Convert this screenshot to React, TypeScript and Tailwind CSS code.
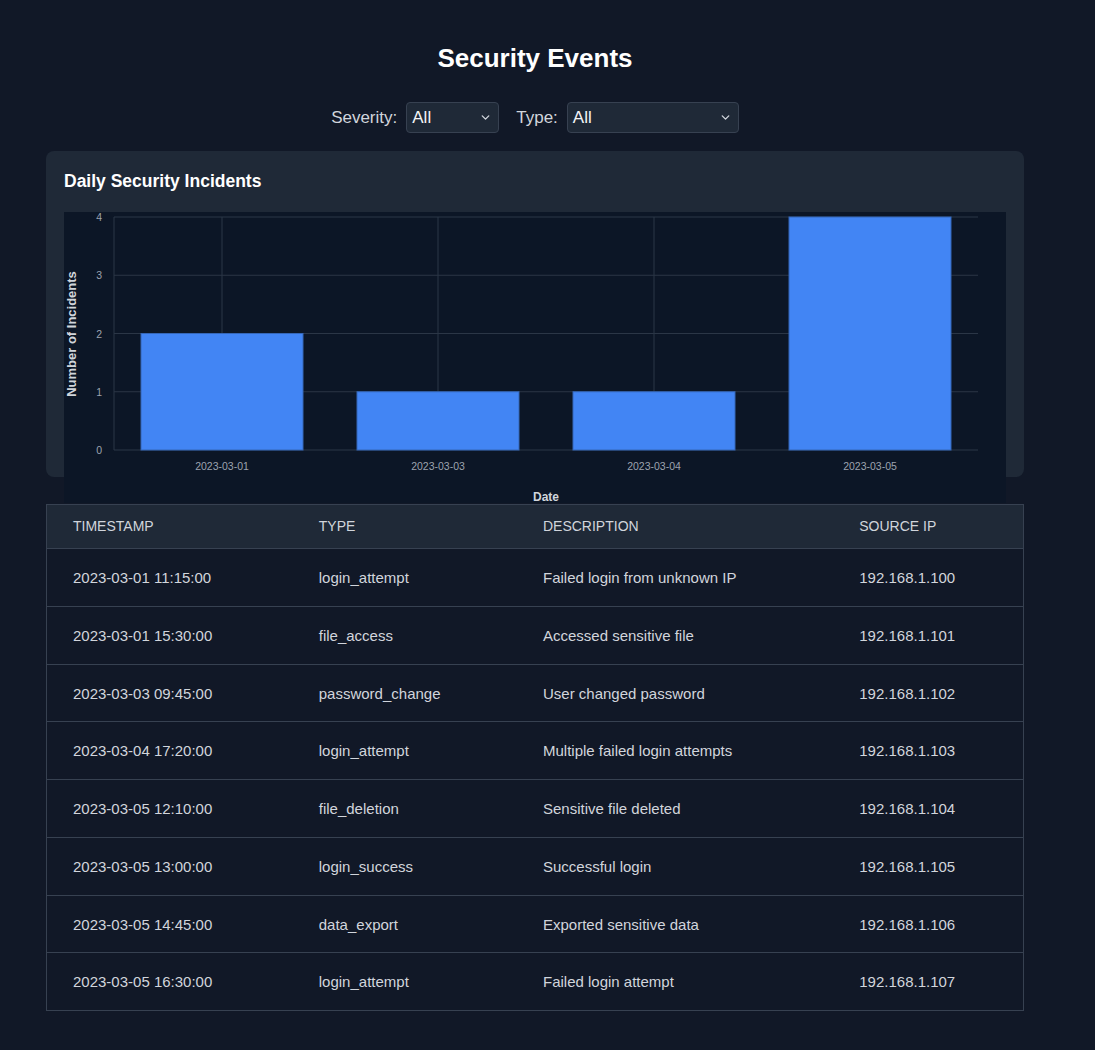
import { ChevronDown } from "lucide-react";

const events = [
  { ts: "2023-03-01 11:15:00", type: "login_attempt", desc: "Failed login from unknown IP", ip: "192.168.1.100" },
  { ts: "2023-03-01 15:30:00", type: "file_access", desc: "Accessed sensitive file", ip: "192.168.1.101" },
  { ts: "2023-03-03 09:45:00", type: "password_change", desc: "User changed password", ip: "192.168.1.102" },
  { ts: "2023-03-04 17:20:00", type: "login_attempt", desc: "Multiple failed login attempts", ip: "192.168.1.103" },
  { ts: "2023-03-05 12:10:00", type: "file_deletion", desc: "Sensitive file deleted", ip: "192.168.1.104" },
  { ts: "2023-03-05 13:00:00", type: "login_success", desc: "Successful login", ip: "192.168.1.105" },
  { ts: "2023-03-05 14:45:00", type: "data_export", desc: "Exported sensitive data", ip: "192.168.1.106" },
  { ts: "2023-03-05 16:30:00", type: "login_attempt", desc: "Failed login attempt", ip: "192.168.1.107" },
];

const daily = [
  { date: "2023-03-01", count: 2 },
  { date: "2023-03-03", count: 1 },
  { date: "2023-03-04", count: 1 },
  { date: "2023-03-05", count: 4 },
];

function Select({ width }: { width: string }) {
  return (
    <div
      className={`flex items-center justify-between h-[31px] ${width} pl-[5px] pr-[6px] bg-[#1f2937] border border-[#374151] rounded-[4px] text-[17px] text-gray-100`}
    >
      <span>All</span>
      <ChevronDown size={13} strokeWidth={2.5} className="text-gray-300" />
    </div>
  );
}

function IncidentChart() {
  const left = 50;
  const right = 914;
  const top = 5;
  const bottom = 238;
  const step = (bottom - top) / 4;
  const band = (right - left) / daily.length;
  const barW = band * 0.75;

  return (
    <svg width="942" height="291" viewBox="0 0 942 291" className="block">
      <rect x="0" y="0" width="942" height="291" fill="#0c1626" />
      {[0, 1, 2, 3, 4].map((v) => {
        const y = bottom - v * step;
        return (
          <g key={v}>
            <line x1={left} x2={right} y1={y} y2={y} stroke="#2b3646" strokeWidth="1" />
            <text x={38} y={y + 4} textAnchor="end" fontSize="10.5" fill="#9ca3af" fontFamily="Liberation Sans, Arial, sans-serif">
              {v}
            </text>
          </g>
        );
      })}
      <line x1={left} x2={left} y1={top} y2={bottom} stroke="#2b3646" strokeWidth="1" />
      {daily.map((d, i) => {
        const cx = left + band * i + band / 2;
        const h = d.count * step;
        return (
          <g key={d.date}>
            <line x1={cx} x2={cx} y1={top} y2={bottom} stroke="#2b3646" strokeWidth="1" />
            <rect
              x={cx - barW / 2}
              y={bottom - h}
              width={barW}
              height={h}
              fill="#4285f4"
              stroke="#3567b8"
              strokeWidth="1"
            />
            <text x={cx} y={258} textAnchor="middle" fontSize="10.5" fill="#9ca3af" fontFamily="Liberation Sans, Arial, sans-serif">
              {d.date}
            </text>
          </g>
        );
      })}
      <text x={482} y={289} textAnchor="middle" fontSize="12" fontWeight="700" fill="#d1d5db" fontFamily="Liberation Sans, Arial, sans-serif">
        Date
      </text>
      <text
        transform="translate(11.5 122) rotate(-90)"
        textAnchor="middle"
        fontSize="13"
        fontWeight="700"
        fill="#d1d5db"
        fontFamily="Liberation Sans, Arial, sans-serif"
      >
        Number of Incidents
      </text>
    </svg>
  );
}

export default function App() {
  return (
    <div className="min-h-[1050px] bg-[#111827] text-gray-100 font-['Liberation_Sans',Arial,sans-serif] pt-[42px] pb-10">
      <div className="ml-[46px] w-[978px]">
        <h1 className="text-center text-[26px] leading-8 font-bold text-white">Security Events</h1>

        <div className="flex items-center justify-center mt-[28px] text-[17px] text-gray-300">
          <span className="mr-[9px]">Severity:</span>
          <Select width="w-[93px]" />
          <span className="ml-[17px] mr-[9px]">Type:</span>
          <Select width="w-[172px]" />
        </div>

        <div className="mt-[18px] h-[326px] bg-[#1f2937] rounded-lg p-[18px]">
          <h2 className="text-[17.5px] leading-6 font-bold text-white mb-[19px]">Daily Security Incidents</h2>
          <IncidentChart />
        </div>

        <table className="mt-[27px] w-full table-fixed border-collapse border border-[#374151]">
          <colgroup>
            <col className="w-[246px]" />
            <col className="w-[224px]" />
            <col className="w-[316px]" />
            <col className="w-[190px]" />
          </colgroup>
          <thead className="bg-[#1f2937]">
            <tr className="h-[44px] text-left text-[14px] uppercase text-gray-300">
              <th className="pl-[26px] font-normal">Timestamp</th>
              <th className="pl-[26px] font-normal">Type</th>
              <th className="pl-[26px] font-normal">Description</th>
              <th className="pl-[26px] font-normal">Source IP</th>
            </tr>
          </thead>
          <tbody>
            {events.map((e) => (
              <tr key={e.ts} className="h-[57.75px] border-t border-[#374151] text-[15px] text-gray-300">
                <td className="pl-[26px] pt-[2px]">{e.ts}</td>
                <td className="pl-[26px] pt-[2px]">{e.type}</td>
                <td className="pl-[26px] pt-[2px]">{e.desc}</td>
                <td className="pl-[26px] pt-[2px]">{e.ip}</td>
              </tr>
            ))}
          </tbody>
        </table>
      </div>
    </div>
  );
}
